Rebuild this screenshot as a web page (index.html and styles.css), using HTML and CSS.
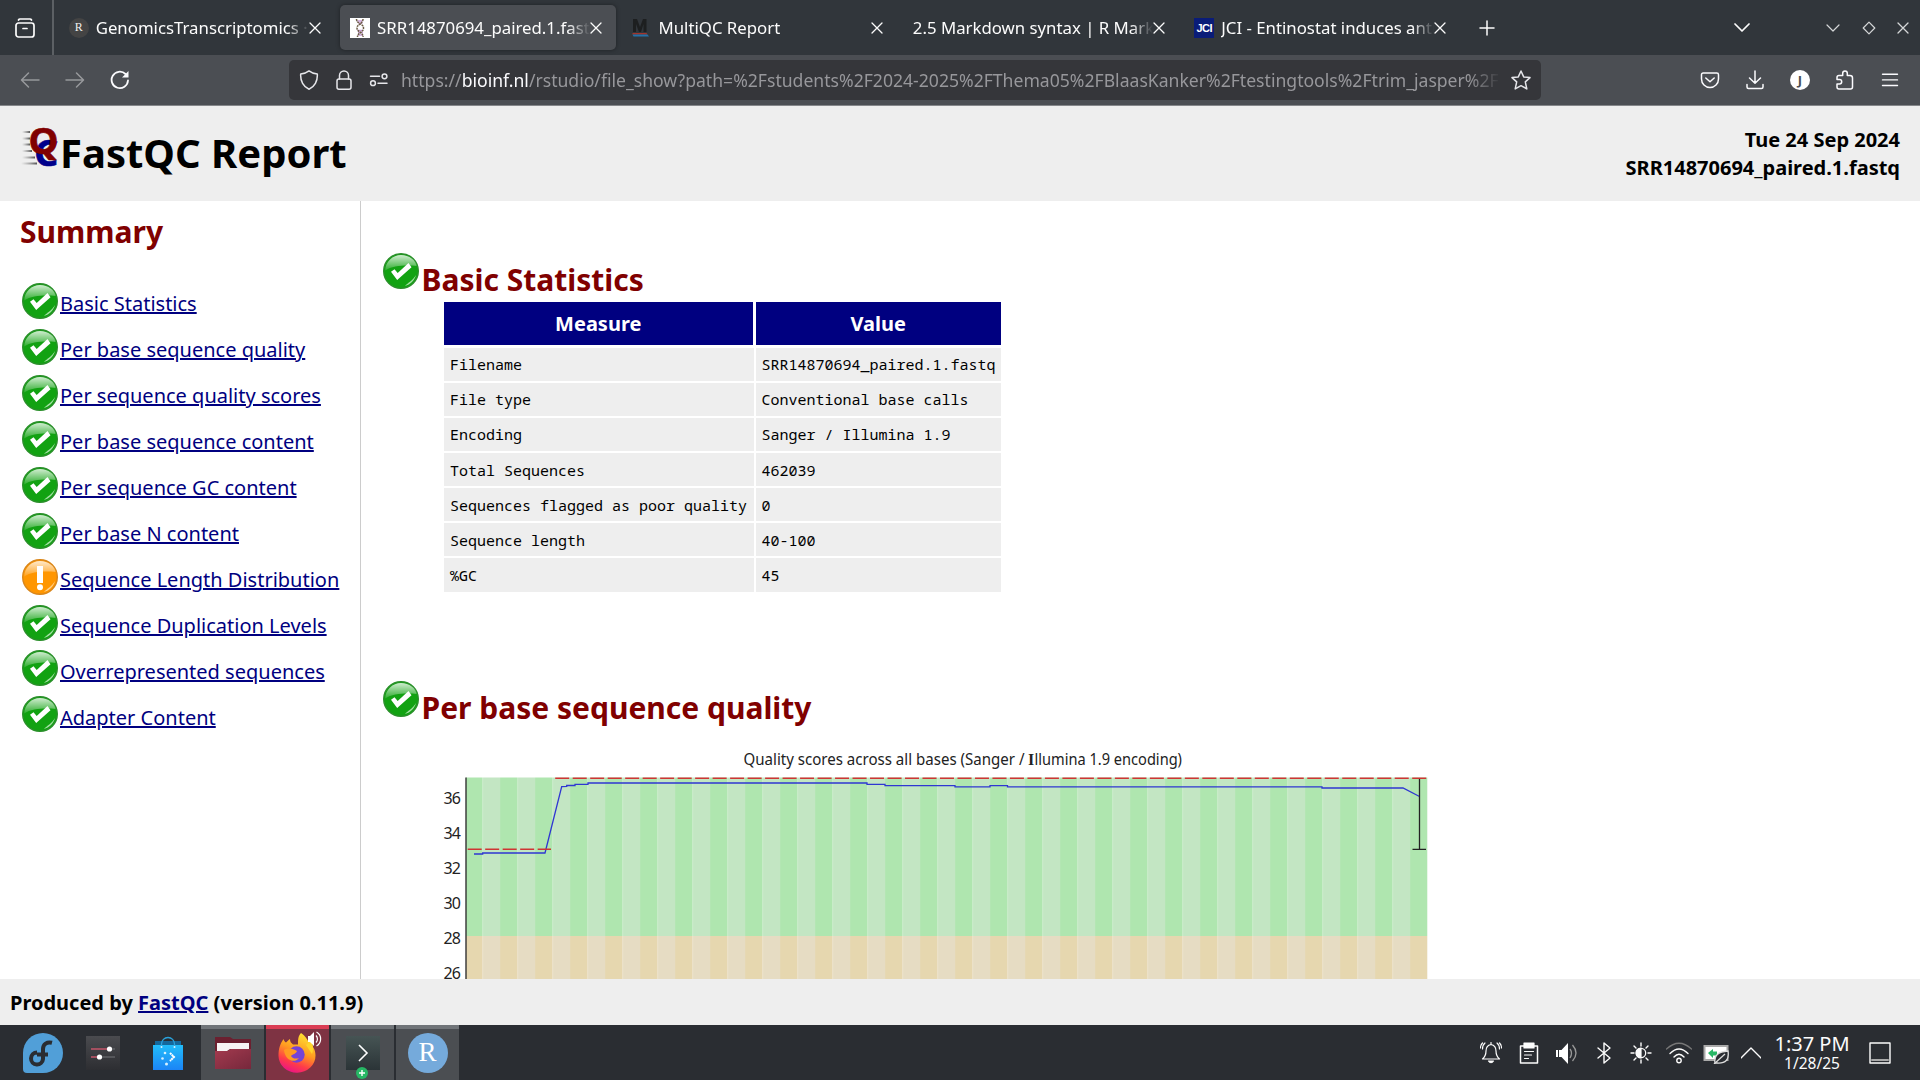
FILE: index.html
```html
<!DOCTYPE html>
<html lang="en">
<head>
<meta charset="utf-8">
<title>SRR14870694_paired.1.fastq FastQC Report</title>
<link rel="stylesheet" href="styles.css">
</head>
<body>
<svg class="defs" width="0" height="0" aria-hidden="true">
  <defs>
    <linearGradient id="gloss" x1="0" y1="0" x2="0" y2="1"><stop offset="0" stop-color="#fff" stop-opacity=".8"/><stop offset="1" stop-color="#fff" stop-opacity=".12"/></linearGradient>
    <linearGradient id="fox" x1=".7" y1="0" x2=".3" y2="1"><stop offset="0" stop-color="#ffe534"/><stop offset=".45" stop-color="#ff9a20"/><stop offset=".75" stop-color="#ff3b49"/><stop offset="1" stop-color="#e9118a"/></linearGradient>
    <linearGradient id="bag" x1="0" y1="0" x2="0" y2="1"><stop offset="0" stop-color="#22bdfa"/><stop offset="1" stop-color="#1b84f6"/></linearGradient>
    <linearGradient id="folder" x1="0" y1="0" x2="1" y2="1"><stop offset="0" stop-color="#a33a4e"/><stop offset="1" stop-color="#76283c"/></linearGradient>
    <linearGradient id="slate" x1="0" y1="0" x2="0" y2="1"><stop offset="0" stop-color="#4a4b4f"/><stop offset="1" stop-color="#2d2e32"/></linearGradient>
    <linearGradient id="term" x1="0" y1="0" x2="0" y2="1"><stop offset="0" stop-color="#465454"/><stop offset="1" stop-color="#2b3437"/></linearGradient>
    <linearGradient id="speed" x1="0" y1="0" x2="1" y2="0"><stop offset="0" stop-color="#888" stop-opacity="0"/><stop offset="1" stop-color="#555"/></linearGradient>
    <symbol id="pass" viewBox="0 0 36 36">
      <circle cx="18" cy="18" r="17.3" fill="#12a212" stroke="#2b8f2b" stroke-width="1.4"/>
      <path d="M2.2 17.5C2.5 8.500 9.500 2 18 2s15 5.500 15.600 11C25 12 10 12 2.200 17.500z" fill="url(#gloss)"/>
      <path d="M33 22c-1.500 5.500-5.500 9.500-11 11 3-3.500 7.500-5 11-11z" fill="#d5f3d5" opacity=".75"/>
      <path d="M8 18.800l3.500-2.600 3.200 3.800L25.500 10l3 4.200L14.200 27z" fill="#fff"/>
    </symbol>
    <symbol id="warn" viewBox="0 0 36 36">
      <circle cx="18" cy="18" r="17.300" fill="#ff9600" stroke="#d9861a" stroke-width="1.400"/>
      <path d="M2.200 17.500C2.500 8.500 9.500 2 18 2s15 5.500 15.600 11C25 12 10 12 2.200 17.500z" fill="url(#gloss)"/>
      <path d="M33 22c-1.500 5.500-5.500 9.500-11 11 3-3.500 7.500-5 11-11z" fill="#ffe6bd" opacity=".75"/>
      <path d="M15 7h6v17h-6z" fill="#fff"/><circle cx="18" cy="28.200" r="3" fill="#fff"/>
    </symbol>
    <symbol id="x" viewBox="0 0 12 12"><path d="M1 1l10 10M11 1L1 11" stroke="currentColor" stroke-width="1.300" stroke-linecap="round"/></symbol>
  </defs>
</svg>

<div class="tabbar">
  <div class="view-btn"><svg width="20" height="20" viewBox="0 0 20 20" class="line"><rect x="1" y="5" width="18" height="14" rx="2.500" stroke-width="1.700"/><path d="M3.500 2Q4 1 5 1h10q1 0 1.500 1M8 10.500h4" stroke-width="1.700"/></svg></div>
  <div class="tabs">
    <div class="tab"><span class="fav fav-r">R</span><span class="label">GenomicsTranscriptomics · Data</span><svg class="close"><use href="#x"/></svg></div>
    <div class="tab active"><svg class="fav" viewBox="0 0 20 20"><path fill="#fff" d="M0 0h20v20H0z"/><path d="M7.500 3h5M8.500 5h4M7.500 12.500h5M8 14.500h5M8 17h5" stroke="#c9a0d8" stroke-width="1.300"/><path d="M6.500 1c0 5 7 4.500 7 9s-6 4.500-6 9M13 1c0 5-6 5-6 9s6.500 4.500 6 9" fill="none" stroke="#6b5b45" stroke-width="1.500" stroke-dasharray="2 .7"/></svg><span class="label">SRR14870694_paired.1.fastq</span><svg class="close"><use href="#x"/></svg></div>
    <div class="tab"><svg class="fav" viewBox="0 0 20 20"><path d="M2 14V1h4l3 8 3-8h3.500v13h-3V6L10 14H8L5 6v8z" fill="#1d1f20"/><path d="M1.500 15h14l1 1.500h-15z" fill="#a3342b"/><path d="M1.500 16.500h15l1.500 2H2.500z" fill="#2470a8"/></svg><span class="label">MultiQC Report</span><svg class="close"><use href="#x"/></svg></div>
    <div class="tab bare"><span class="label">2.5 Markdown syntax | R Markdown</span><svg class="close"><use href="#x"/></svg></div>
    <div class="tab"><span class="fav fav-jci">JCI</span><span class="label">JCI - Entinostat induces antitumor</span><svg class="close"><use href="#x"/></svg></div>
  </div>
  <svg class="plus line" width="16" height="16" viewBox="0 0 16 16"><path d="M8 1v14M1 8h14" stroke-width="1.500"/></svg>
  <div class="winctl">
    <svg class="line list" width="16" height="10" viewBox="0 0 16 10"><path d="M1 1l7 7 7-7" stroke-width="1.700"/></svg>
    <svg class="line dim" width="14" height="8" viewBox="0 0 14 8"><path d="M1 1l6 6 6-6"/></svg>
    <svg class="line dim" width="14" height="14" viewBox="0 0 14 14"><path d="M7 1.200L12.800 7 7 12.800 1.200 7z"/></svg>
    <svg class="dim" width="12" height="12"><use href="#x"/></svg>
  </div>
</div>

<div class="toolbar">
  <div class="nav">
    <svg class="line off" width="20" height="20" viewBox="0 0 20 20"><path d="M19 10H2M8.500 3l-7 7 7 7" stroke-width="1.500"/></svg>
    <svg class="line off" width="20" height="20" viewBox="0 0 20 20"><path d="M1 10h17M11.500 3l7 7-7 7" stroke-width="1.500"/></svg>
    <svg class="line" width="20" height="20" viewBox="0 0 20 20"><path d="M18 10.500A8.200 8.200 0 1 1 15.500 4" stroke-width="1.800"/><path d="M18.500 1v6.500H12z" fill="currentColor" stroke="none"/></svg>
  </div>
  <div class="urlbar">
    <svg class="line" width="20" height="20" viewBox="0 0 20 20"><path d="M10 .9c2.500 2 5.500 2.800 8.300 3.100C18.800 11 15.500 17 10 19.200 4.500 17 1.200 11 1.700 4 4.500 3.700 7.500 2.900 10 .9z" stroke-width="1.500"/></svg>
    <svg class="line" width="20" height="20" viewBox="0 0 20 20"><rect x="3" y="9" width="14" height="10.200" rx="2" stroke-width="1.500"/><path d="M5.500 9V5.500a4.500 4.500 0 0 1 9 0V9" stroke-width="1.500"/></svg>
    <svg class="line" width="20" height="20" viewBox="0 0 20 20"><path d="M1.500 6.300h9M9 13.200h9" stroke-width="1.500"/><circle cx="15.500" cy="6.300" r="2.400" stroke-width="1.500"/><circle cx="4" cy="13.200" r="2.400" stroke-width="1.500"/></svg>
    <span class="url">https://<b>bioinf.nl</b>/rstudio/file_show?path=%2Fstudents%2F2024-2025%2FThema05%2FBlaasKanker%2Ftestingtools%2Ftrim_jasper%2FFastQC</span>
    <svg class="line star" width="20" height="20" viewBox="0 0 20 20"><path d="M10 1l2.700 5.900 6.300.7-4.700 4.300 1.500 7L10 15.700l-5.800 3.200 1.500-7L1 7.600l6.300-.7z" stroke-width="1.500"/></svg>
  </div>
  <div class="actions">
    <svg class="line" width="20" height="20" viewBox="0 0 20 20"><path d="M3.200 3h13.600q1.700 0 1.700 1.700V9a8.500 8.500 0 0 1-17 0V4.700Q1.500 3 3.200 3zM5.800 8l4.200 3.800L14.200 8" stroke-width="1.500"/></svg>
    <svg class="line" width="20" height="20" viewBox="0 0 20 20"><path d="M10 1v12M4.500 8l5.500 5.300L15.500 8M2 14.500V17q0 1.500 1.500 1.500h13Q18 18.500 18 17v-2.500" stroke-width="1.500"/></svg>
    <span class="avatar">J</span>
    <svg class="line" width="20" height="20" viewBox="0 0 20 20"><path d="M2 7.500q0-2 2-2h3.700V3.300a2.300 2.300 0 0 1 4.600 0v2.200H15q2.500 0 2.500 2.500v9q0 2-2 2H4q-2 0-2-2v-3h2.500a2.200 2.200 0 0 0 0-4.400H2z" stroke-width="1.500"/></svg>
    <svg class="line" width="20" height="20" viewBox="0 0 20 20"><path d="M2.500 4.200h15M2.500 9.900h15M2.500 15.500h15" stroke-width="1.400"/></svg>
  </div>
</div>

<header class="header">
  <svg class="logo" width="40" height="40" viewBox="0 0 40 40">
    <g fill="url(#speed)"><rect x="2" y="4" width="8" height="2"/><rect x="2" y="10.500" width="8" height="2"/><rect x="2" y="16.500" width="8" height="2"/><rect x="2" y="23" width="10" height="2"/><rect x="2" y="29.500" width="13" height="2"/><rect x="1" y="35.500" width="16" height="2"/></g>
    <text class="qc" x="14.200" y="38.500" font-size="35" fill="#00008b" stroke="#00008b" textLength="24" lengthAdjust="spacingAndGlyphs">C</text>
    <text class="qc" x="8.500" y="26.500" font-size="35" fill="#800000" stroke="#800000" textLength="30" lengthAdjust="spacingAndGlyphs">Q</text>
  </svg>
  <h1>FastQC Report</h1>
  <div class="fileinfo">Tue 24 Sep 2024<br>SRR14870694_paired.1.fastq</div>
</header>

<div class="body">
  <nav class="summary">
    <h2>Summary</h2>
    <ul>
      <li><svg><use href="#pass"/></svg><a>Basic Statistics</a></li>
      <li><svg><use href="#pass"/></svg><a>Per base sequence quality</a></li>
      <li><svg><use href="#pass"/></svg><a>Per sequence quality scores</a></li>
      <li><svg><use href="#pass"/></svg><a>Per base sequence content</a></li>
      <li><svg><use href="#pass"/></svg><a>Per sequence GC content</a></li>
      <li><svg><use href="#pass"/></svg><a>Per base N content</a></li>
      <li><svg><use href="#warn"/></svg><a>Sequence Length Distribution</a></li>
      <li><svg><use href="#pass"/></svg><a>Sequence Duplication Levels</a></li>
      <li><svg><use href="#pass"/></svg><a>Overrepresented sequences</a></li>
      <li><svg><use href="#pass"/></svg><a>Adapter Content</a></li>
    </ul>
  </nav>
  <main class="main">
    <section class="module stats">
      <h2><svg><use href="#pass"/></svg>Basic Statistics</h2>
      <table>
        <thead><tr><th class="measure">Measure</th><th class="value">Value</th></tr></thead>
        <tbody>
          <tr><td>Filename</td><td>SRR14870694_paired.1.fastq</td></tr>
          <tr><td>File type</td><td>Conventional base calls</td></tr>
          <tr><td>Encoding</td><td>Sanger / Illumina 1.9</td></tr>
          <tr><td>Total Sequences</td><td>462039</td></tr>
          <tr><td>Sequences flagged as poor quality</td><td>0</td></tr>
          <tr><td>Sequence length</td><td>40-100</td></tr>
          <tr><td>%GC</td><td>45</td></tr>
        </tbody>
      </table>
    </section>
    <section class="module quality">
      <h2><svg><use href="#pass"/></svg>Per base sequence quality</h2>
      <svg class="chart" width="1000" height="240" viewBox="440 739 1000 240">
        <defs>
          <pattern id="good" x="465.200" y="0" width="35" height="1080" patternUnits="userSpaceOnUse"><path fill="#afe6af" d="M0 0h17.500v1080H0z"/><path fill="#c3e6c3" d="M17.500 0H35v1080H17.500z"/></pattern>
          <pattern id="fair" x="465.200" y="0" width="35" height="1080" patternUnits="userSpaceOnUse"><path fill="#e6d7af" d="M0 0h17.500v1080H0z"/><path fill="#e6dcc3" d="M17.500 0H35v1080H17.500z"/></pattern>
        </defs>
        <path fill="url(#good)" d="M466 777.500h961.400V936H466z"/>
        <path fill="url(#fair)" d="M466 936h961.400v43H466z"/>
        <path d="M466 777.500V979" stroke="#333" stroke-width="1.400"/>
        <g fill="none" stroke-width="1.300">
          <path d="M474 854h8.700v-1H545l16.700-66.300 5-.3V785.500h8.300v-1.200h13V783H867v1.300h18v1.300h70v1.200h35v-1.200h17.500v1.200H1322v1.200h81l16.500 8.500" stroke="#2f36d2"/>
          <path d="M1419.500 778v71.300M1412.500 849.300H1426" stroke="#222"/>
          <path d="M467.700 849.300H551M555.200 778.300H1426.500" stroke="#cf3434" stroke-width="1.400" stroke-dasharray="14 3.490"/>
        </g>
        <g class="axis"><text x="443.500" y="804" textLength="17.500">36</text><text x="443.500" y="839" textLength="17.500">34</text><text x="443.500" y="874" textLength="17.500">32</text><text x="443.500" y="909" textLength="17.500">30</text><text x="443.500" y="944" textLength="17.500">28</text><text x="443.500" y="979" textLength="17.500">26</text></g>
        <text class="axis" x="743.500" y="764.800" textLength="281" lengthAdjust="spacingAndGlyphs">Quality scores across all bases (Sanger /</text>
        <text class="axis serif" x="1028" y="764.800">I</text>
        <text class="axis" x="1034.500" y="764.800" textLength="147.500" lengthAdjust="spacingAndGlyphs">llumina 1.9 encoding)</text>
      </svg>
    </section>
  </main>
</div>

<footer class="footer">Produced by&nbsp;<a>FastQC</a>&nbsp;(version 0.11.9)</footer>

<div class="taskbar">
  <div class="launch"><svg width="40" height="40" viewBox="0 0 40 40"><path d="M0 20a20 20 0 1 1 20 20H4q-4 0-4-4z" fill="#519fd8"/><path d="M29 9.800C24 8.500 20 11 20 16v10a6 6 0 1 1-6-6.500M14 21.500h11" fill="none" stroke="#2a2d32" stroke-width="4"/></svg></div>
  <div class="launch"><svg width="34" height="34" viewBox="0 0 34 34"><path fill="url(#slate)" d="M0 0h34v34H0z"/><path d="M5 13h19M5 21h8" stroke="#c4566a" stroke-width="1.500"/><path d="M13 21h16M24 13h5" stroke="#606165" stroke-width="1.500"/><circle cx="23.500" cy="13" r="2.600" fill="#fff"/><circle cx="13.500" cy="21" r="2.600" fill="#fff"/></svg></div>
  <div class="launch"><svg width="30" height="34" viewBox="0 0 30 34"><path d="M2 5h26v8H2z" fill="#14689c"/><path d="M0 9h30v25H0z" fill="url(#bag)"/><path d="M8.500 11V8a6.500 6.500 0 0 1 13 0v3" fill="none" stroke="#2aa2dc" stroke-width="1.300"/><g fill="#d7f2ff"><circle cx="8.500" cy="11" r="1"/><circle cx="21.500" cy="11" r="1"/><circle cx="12" cy="17" r="1.300"/><circle cx="9.500" cy="22.500" r="1.300"/><circle cx="13.500" cy="28" r="1.500"/></g><path d="M17 17l4 4-4 4" fill="none" stroke="#fff" stroke-width="2" stroke-dasharray="2 .5"/></svg></div>
  <div class="task"><svg width="36" height="34" viewBox="0 0 36 34"><path d="M0 1h15l3 2h18v14H0z" fill="#6b2030"/><path d="M2 7h32v6H15l-3 2H2z" fill="#f6f4f4"/><path d="M0 15h13l3-2h20v20H0z" fill="url(#folder)"/></svg></div>
  <div class="task urgent"><svg width="46" height="44" viewBox="0 0 46 44"><path d="M26 2c5 3 6 7 8.500 10 3 3 6 6 6 12.500A18.500 17 0 0 1 3.500 25c0-7 1.500-12 5-17 .5 2 1.500 3 2.500 3.500 2-2 3-3 4-3.500 0 2.500 1 4 3 5.500h5C23 9 23 5 26 2z" fill="url(#fox)"/><circle cx="21.500" cy="23.500" r="8.200" fill="#7543d6"/><path d="M9 19c5-3 9-1 13 1-1 3-4 3-6 5 2 3 5 3 8 2-5 6-14 2-15-8z" fill="#ff9a22"/><path d="M31 14l5-5c2 5 3 8 1 14z" fill="#ffd42b"/><path d="M33 5h2l4-4v14l-4-4h-2z" fill="#fff"/><path d="M41 4.500a5 5 0 0 1 0 7M41.500 1a8 8 0 0 1 0 14" fill="none" stroke="#fff" stroke-width="1.200"/></svg></div>
  <div class="task term"><svg width="34" height="44" viewBox="0 0 34 44"><path d="M0 5h34v34H0z" fill="url(#term)"/><path d="M13 14l8 8-8 8" fill="none" stroke="#fff" stroke-width="1.600"/><circle cx="16" cy="42" r="6" fill="#27b765"/><path d="M16 39v6M13 42h6" stroke="#fff" stroke-width="1.400"/></svg></div>
  <div class="task"><span class="r-icon">R</span></div>
  <div class="tray">
    <svg class="line" width="22" height="22" viewBox="0 0 22 22"><path d="M2.500 17q3.500-3 3.500-8 0-5.500 5-6.500 5 1 5 6.500 0 5 3.500 8zM11 .5v2M5 1Q2.500 3 2.500 7M2.500 1Q.5 3 .5 6M17 1q2.500 2 2.500 6M19.500 1q2 2 2 5"/><path d="M8.500 19h5q-2.500 3.500-5 0z" fill="currentColor"/></svg>
    <svg class="line" width="22" height="22" viewBox="0 0 22 22"><path d="M2.500 4h17v17h-17z" stroke-width="1.500"/><path d="M6 1h10v5H6z" fill="currentColor"/><path d="M6.500 9.500h9M6.500 13h7M6.500 16.500h4"/></svg>
    <svg width="22" height="22" viewBox="0 0 22 22"><path d="M1 8h2v7H1zM4 8h2.500L13 1v21l-6.500-7H4z" fill="#fff"/><path d="M15 7q3 4 0 9M17.500 3q7 8 0 16" fill="none" stroke="#999" stroke-width="1.300"/></svg>
    <svg class="line" width="22" height="22" viewBox="0 0 22 22"><path d="M5 6l12 10-6 5V1l6 5L5 16" stroke-width="1.400"/></svg>
    <svg class="line" width="22" height="22" viewBox="0 0 22 22"><circle cx="11" cy="11" r="4.700" stroke-width="1.300"/><path d="M11 6a5 5 0 0 0 0 10z" fill="currentColor"/><path d="M11 1v3M11 18v3M1 11h3M18 11h3M4 4l2 2M16 16l2 2M4 18l2-2M16 6l2-2" stroke-width="1.400"/></svg>
    <svg class="line wide" width="26" height="22" viewBox="0 0 26 22"><path d="M.5 7q12.500-11.500 25 0" stroke="#777"/><path d="M4 11.500q9-9 18 0M8 15q5-5.500 10 0" stroke-width="1.400"/><circle cx="13" cy="18.500" r="2.200" stroke-width="1.400"/></svg>
    <svg class="wide" width="26" height="22" viewBox="0 0 26 22"><path d="M1.500 4h23v14h-23z" fill="#fff" stroke="#aaa" stroke-width="2"/><path d="M5 11l5-4v2.500h4v4h-4V16z" fill="#27b765"/><path d="M12 21q-2-11 13-12 2 13-11 12z" fill="#2a2d32" stroke="#ddd" stroke-width="1.300"/><path d="M11 22l11-10" stroke="#ddd" stroke-width="1.300"/></svg>
    <svg class="line more" width="20" height="12" viewBox="0 0 20 12"><path d="M0 11L10 1l10 10" stroke-width="1.400"/></svg>
    <div class="clock"><span>1:37 PM</span><small>1/28/25</small></div>
    <svg class="line" width="22" height="22" viewBox="0 0 22 22"><path d="M1 1h20v20H1z" stroke-width="1.400"/><path d="M3 18h16" stroke="#aaa" stroke-width="2"/></svg>
  </div>
</div>
</body>
</html>
```
FILE: styles.css
```css
* { box-sizing: border-box; }
body {
  margin: 0;
  width: 1920px;
  height: 1080px;
  overflow: hidden;
  display: flex;
  flex-direction: column;
  background: #fff;
  font: 20px "Noto Sans", sans-serif;
  color: #000;
}
svg { display: block; flex: none; }
.defs { position: absolute; }
.line { fill: none; stroke: currentColor; stroke-width: 1.2; stroke-linecap: round; stroke-linejoin: round; }

/* Tab strip */
.tabbar {
  height: 55px;
  flex: none;
  display: flex;
  align-items: center;
  background: #31363b;
  color: #fcfcfc;
}
.view-btn { width: 54px; height: 55px; padding: 18px 0 0 15px; border-right: 2px solid #5c6064; }
.tabs { display: flex; gap: 5.4px; padding-left: 4.7px; }
.tab {
  width: 276px;
  height: 45px;
  display: flex;
  align-items: center;
  padding: 0 14px 0 10px;
  border-radius: 5px;
  font-size: 16.8px;
}
.tab.active { background: #4b4e53; box-shadow: 0 0 4px rgba(0, 0, 0, .4); }
.fav { width: 20px; height: 20px; margin-right: 7px; flex: none; }
.fav-r {
  border-radius: 50%;
  background: #444;
  color: #eee;
  font: 12px/19px "Liberation Serif", serif;
  text-align: center;
}
.fav-jci { background: #0a1c78; color: #fff; font: bold 11px/20px "Liberation Sans", sans-serif; text-align: center; letter-spacing: -.5px; }
.label {
  flex: 1;
  overflow: hidden;
  white-space: nowrap;
  -webkit-mask-image: linear-gradient(to left, transparent, #000 22px);
  mask-image: linear-gradient(to left, transparent, #000 22px);
}
.close { width: 12px; height: 12px; }
.plus { margin-left: 18.5px; }
.winctl { margin-left: auto; padding-right: 11px; display: flex; align-items: center; gap: 21.5px; }
.winctl .list { margin-right: 55px; }
.dim { color: #d5d7d8; }

/* Navigation toolbar */
.toolbar {
  height: 51px;
  flex: none;
  display: flex;
  align-items: center;
  background: #4b4e53;
  border-bottom: 1px solid #85878a;
  color: #fbfbfe;
}
.nav { display: flex; gap: 25px; padding-left: 20px; width: 289px; }
.off { color: #97999c; }
.urlbar {
  width: 1252px;
  height: 40px;
  display: flex;
  align-items: center;
  gap: 15px;
  padding: 0 10px;
  border-radius: 5px;
  background: #35363a;
  color: #e6e6ea;
}
.url {
  flex: 1;
  margin: -1px -5px 0 -3px;
  overflow: hidden;
  white-space: nowrap;
  font-size: 17.6px;
  color: #97979b;
  -webkit-mask-image: linear-gradient(to left, transparent, #000 32px);
  mask-image: linear-gradient(to left, transparent, #000 32px);
}
.url b { font-weight: 400; color: #fbfbfe; }
.actions { margin-left: auto; padding-right: 20px; display: flex; gap: 25px; }
.avatar {
  width: 20px;
  height: 20px;
  border-radius: 50%;
  background: #fff;
  color: #4b4e53;
  font: bold 13px/20px "Noto Sans", sans-serif;
  text-align: center;
}

/* Report header */
.header {
  height: 95px;
  flex: none;
  display: flex;
  align-items: flex-start;
  padding: 20px 20px 0;
  background: #eee;
  font-weight: 700;
}
.logo { margin-top: 1px; }
.qc { font-family: "Noto Sans", sans-serif; font-weight: 700; stroke-width: .6; }
h1 { margin: 0; font-size: 40px; line-height: 54px; }
.fileinfo { margin-left: auto; text-align: right; line-height: 27.5px; }

.body { height: 778px; flex: none; display: flex; overflow: hidden; }
h2 { margin: 0; font-size: 30px; line-height: 41px; font-weight: 700; color: #800000; }
a { color: #000080; text-decoration: underline; }

/* Sidebar */
.summary { width: 361px; padding: 10px 0 0 20px; border-right: 1px solid #ccc; }
.summary ul { list-style: none; margin: 26px 0 0; padding: 0; }
.summary li { height: 45.94px; display: flex; align-items: center; }
.summary li svg { width: 36px; height: 36px; margin: 0 2px; }
.summary a { padding-top: 6px; }

/* Modules */
.main { flex: 1; }
.module { padding-left: 22px; }
.module h2 { display: flex; }
.module h2 svg { width: 36px; height: 36px; margin: -6.5px 2.5px 0 0; }
.stats { padding-top: 58px; height: 486px; }
.stats h2 { height: 40.5px; }
table {
  margin-left: 59px;
  border-collapse: separate;
  border-spacing: 2px;
  table-layout: fixed;
  width: 561px;
}
th { height: 44px; padding: 0; background: #000080; border-bottom: 1px solid #fff; color: #fff; }
.measure { width: 309.500px; border-right: .5px solid #fff; }
td { height: 33.17px; padding: 0 0 0 6px; background: #eee; font: 15px/20px "Noto Sans Mono", "DejaVu Sans Mono", monospace; white-space: nowrap; }
.chart { margin-left: 57px; margin-top: 11px; }
.axis { font: 16px "Noto Sans", sans-serif; fill: #222; }
.serif { font: bold 16px "Liberation Serif", serif; }

.footer {
  height: 46px;
  flex: none;
  display: flex;
  align-items: center;
  padding-left: 10px;
  padding-top: 1px;
  background: #eee;
  font-weight: 700;
}

/* Desktop panel */
.taskbar { height: 55px; flex: none; display: flex; background: #2a2d32; color: #fcfcfc; }
.launch { width: 65px; display: flex; align-items: center; justify-content: center; padding-right: 1px; }
.launch:first-child { width: 71px; padding: 0 0 0 15px; }
.task {
  width: 63px;
  margin-right: 2px;
  border-top: 4px solid #707478;
  background: #4b4e52;
  display: flex;
  align-items: center;
  justify-content: center;
}
.task svg { margin-top: -3px; overflow: visible; }
.urgent { background: #7e3343; border-top-color: #da3d54; }
.r-icon {
  width: 40px;
  height: 40px;
  margin-top: -3px;
  border-radius: 50%;
  background: #75aadb;
  color: #fff;
  font: 27px/39px "Liberation Serif", serif;
  text-align: center;
}
.tray { margin-left: auto; padding-right: 29px; display: flex; align-items: center; gap: 15.5px; }
.wide { margin: 0 -2px; }
.more { margin: 0 -5px 0 -1.5px; }
.clock { width: 82px; display: flex; flex-direction: column; align-items: center; font-size: 20px; line-height: 20px; padding-right: 1px; }
.clock small { font-size: 15.5px; line-height: 18px; }
```
